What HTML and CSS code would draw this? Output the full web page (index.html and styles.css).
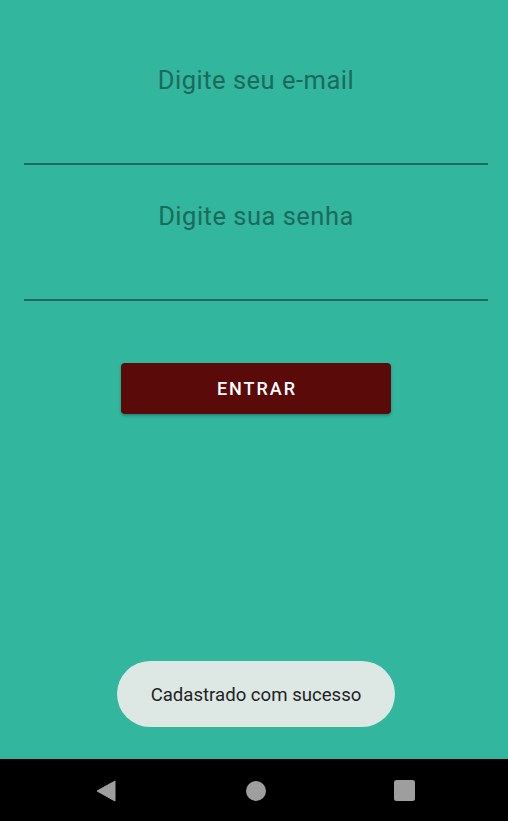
FILE: index.html
```html
<!DOCTYPE html>
<html lang="pt">
<head>
<meta charset="utf-8">
<link rel="stylesheet" href="styles.css">
</head>
<body>
<div class="phone">
  <main class="screen">
    <div class="field first"><span class="hint">Digite seu e-mail</span></div>
    <div class="field"><span class="hint">Digite sua senha</span></div>
    <button class="btn">ENTRAR</button>
    <div class="toast">Cadastrado com sucesso</div>
  </main>
  <nav class="navbar">
    <svg class="nav-icon back" width="20" height="22" viewBox="0 0 20 22"><path d="M19 1 L19 21 L1 11 Z" fill="#9e9e9e" stroke="#9e9e9e" stroke-width="1" stroke-linejoin="round"/></svg>
    <svg class="nav-icon home" width="20" height="20" viewBox="0 0 20 20"><circle cx="10" cy="10" r="10" fill="#9e9e9e"/></svg>
    <svg class="nav-icon recent" width="21" height="21" viewBox="0 0 21 21"><rect x="0" y="0" width="21" height="21" rx="2.5" fill="#9e9e9e"/></svg>
  </nav>
</div>
</body>
</html>
```

FILE: styles.css
```css
html, body {
  margin: 0;
  padding: 0;
}
body {
  font-family: Roboto, "Noto Sans", sans-serif;
  width: 508px;
  height: 821px;
  overflow: hidden;
}
.phone {
  display: flex;
  flex-direction: column;
  height: 821px;
}
.screen {
  position: relative;
  height: 759px;
  background: #32b69e;
  padding: 65px 20px 0 24px;
  box-sizing: border-box;
  display: flex;
  flex-direction: column;
  align-items: stretch;
}
.field {
  display: flex;
  justify-content: center;
  padding-bottom: 68px;
  border-bottom: 2px solid #1f6c5d;
  margin-top: 36px;
}
.field.first {
  margin-top: 0;
}
.hint {
  font-size: 25.5px;
  line-height: 30px;
  color: #1c6a5c;
  letter-spacing: 0.5px;
}
.btn {
  align-self: center;
  margin-top: 62px;
  width: 270px;
  height: 51px;
  border: none;
  border-radius: 4px;
  background: #5b0a0a;
  color: #fff;
  font-family: Roboto, "Noto Sans", sans-serif;
  font-weight: 500;
  font-size: 18px;
  letter-spacing: 2px;
  box-shadow: 0 2px 3px rgba(0,0,0,0.25);
  padding: 0 0 0 2px;
}
.toast {
  position: absolute;
  left: 117px;
  top: 661px;
  width: 278px;
  height: 66px;
  border-radius: 33px;
  background: #dde8e5;
  color: #222;
  font-size: 18.6px;
  display: flex;
  align-items: center;
  justify-content: center;
  padding-top: 1px;
  box-sizing: border-box;
}
.navbar {
  height: 62px;
  background: #000;
  display: flex;
  align-items: center;
  padding: 0 0 0 96px;
}
.nav-icon {
  display: block;
  margin-top: 1px;
}
.home {
  margin-left: 130px;
}
.recent {
  margin-left: 128px;
}
```
